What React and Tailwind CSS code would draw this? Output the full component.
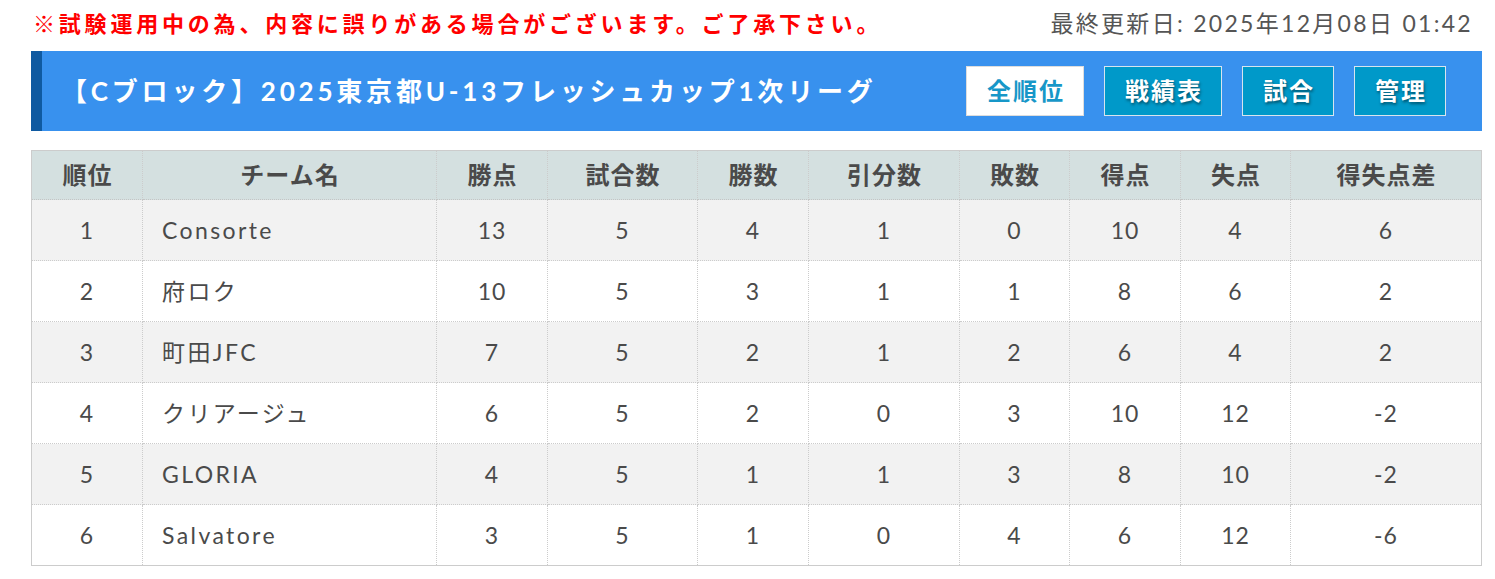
import React from "react";

const columns = [
  { label: "順位", w: "w-[111px]" },
  { label: "チーム名", w: "w-[294px]" },
  { label: "勝点", w: "w-[111px]" },
  { label: "試合数", w: "w-[150px]" },
  { label: "勝数", w: "w-[111px]" },
  { label: "引分数", w: "w-[151px]" },
  { label: "敗数", w: "w-[110px]" },
  { label: "得点", w: "w-[111px]" },
  { label: "失点", w: "w-[110px]" },
  { label: "得失点差", w: "" },
];

const rows = [
  [1, "Consorte", 13, 5, 4, 1, 0, 10, 4, 6],
  [2, "府ロク", 10, 5, 3, 1, 1, 8, 6, 2],
  [3, "町田JFC", 7, 5, 2, 1, 2, 6, 4, 2],
  [4, "クリアージュ", 6, 5, 2, 0, 3, 10, 12, -2],
  [5, "GLORIA", 4, 5, 1, 1, 3, 8, 10, -2],
  [6, "Salvatore", 3, 5, 1, 0, 4, 6, 12, -6],
];

const NavButton = ({ label, active, wide }) => (
  <button
    className={
      active
        ? "h-[50px] w-[118px] bg-white border border-[#dddddd] text-[#1797c8] text-[24px] font-bold tracking-[2px] pl-[2px]"
        : wide
        ? "h-[50px] w-[118px] bg-[#0099c9] border border-[#d8e4ee] text-white text-[24px] font-bold tracking-[2px] pl-[2px] [text-shadow:1px_2px_3px_rgba(0,0,0,0.45)]"
        : "h-[50px] w-[92px] bg-[#0099c9] border border-[#d8e4ee] text-white text-[24px] font-bold tracking-[2px] pl-[2px] [text-shadow:1px_2px_3px_rgba(0,0,0,0.45)]"
    }
  >
    {label}
  </button>
);

const App = () => {
  return (
    <div className="bg-white min-h-screen font-['Lato','Noto_Sans_CJK_JP',sans-serif] text-[#4a4a4a]">
      <div className="flex items-center justify-between pl-[33px] pr-[22px] h-[51px] pb-[4px]">
        <p className="text-[22px] font-bold text-[#ff0000] tracking-[3.8px]">
          ※試験運用中の為、内容に誤りがある場合がございます。ご了承下さい。
        </p>
        <p className="text-[23px] text-[#555555] tracking-[2.3px]">
          最終更新日: 2025年12月08日 01:42
        </p>
      </div>

      <div className="ml-[31px] mr-[13px] h-[80px] flex items-center justify-between bg-[#3891ee] border-l-[11px] border-[#0f5aa1] pl-[19px] pr-[36px]">
        <h1 className="text-white text-[26px] font-bold tracking-[3.8px]">
          【Cブロック】2025東京都U-13フレッシュカップ1次リーグ
        </h1>
        <div className="flex gap-[20px]">
          <NavButton label="全順位" active />
          <NavButton label="戦績表" wide />
          <NavButton label="試合" />
          <NavButton label="管理" />
        </div>
      </div>

      <div className="ml-[31px] mr-[13px] mt-[19px]">
        <table className="w-full border-collapse border border-[#cccccc] table-fixed">
          <thead>
            <tr className="bg-[#d4e0e0] h-[49px]">
              {columns.map((c) => (
                <th
                  key={c.label}
                  className={`${c.w} text-[24px] font-bold text-[#4a4a4a] border-b border-b-[#c4c4c4] border-r border-r-[#cccccc] border-dotted tracking-[1px] pl-[1px]`}
                >
                  {c.label}
                </th>
              ))}
            </tr>
          </thead>
          <tbody>
            {rows.map((r, i) => (
              <tr
                key={r[0]}
                className={i % 2 === 0 ? "bg-[#f2f2f2] h-[61px]" : "bg-white h-[61px]"}
              >
                {r.map((v, j) => (
                  <td
                    key={j}
                    className={
                      j === 1
                        ? "text-left pl-[19px] text-[23px] tracking-[2.4px] border border-dotted border-[#cccccc]"
                        : "text-center text-[23px] tracking-[1px] border border-dotted border-[#cccccc]"
                    }
                  >
                    {v}
                  </td>
                ))}
              </tr>
            ))}
          </tbody>
        </table>
      </div>
    </div>
  );
};

export default App;
